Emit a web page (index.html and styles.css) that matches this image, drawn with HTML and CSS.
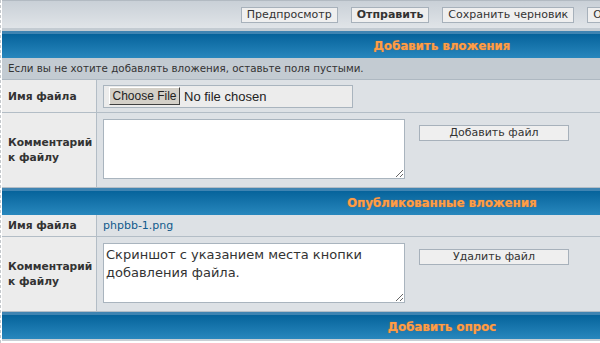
FILE: index.html
```html
<!DOCTYPE html>
<html>
  <head>
    <meta charset="utf-8">
    <title>Вложения</title>
    <link rel="stylesheet" href="styles.css">
  </head>
  <body>
    <div class="page">
      <div class="toolbar">
        <span class="btn">Предпросмотр</span>
        <span class="btn bold">Отправить</span>
        <span class="btn">Сохранить черновик</span>
        <span class="btn">Отмена</span>
      </div>

      <div class="cap">Добавить вложения</div>
      <div class="info">Если вы не хотите добавлять вложения, оставьте поля пустыми.</div>
      <div class="row short">
        <div class="label">Имя файла</div>
        <div class="field">
          <div class="file">
            <span class="choose">Choose File</span>
            <span class="nofile">No file chosen</span>
          </div>
        </div>
      </div>
      <div class="row tall">
        <div class="label">Комментарий к файлу</div>
        <div class="field top">
          <textarea class="comment"></textarea>
          <span class="btn wide">Добавить файл</span>
        </div>
      </div>

      <div class="cap">Опубликованные вложения</div>
      <div class="row name">
        <div class="label">Имя файла</div>
        <div class="field"><a class="link" href="#">phpbb-1.png</a></div>
      </div>
      <div class="row tall">
        <div class="label">Комментарий к файлу</div>
        <div class="field top">
          <textarea class="comment">Скриншот с указанием места кнопки добавления файла.</textarea>
          <span class="btn wide">Удалить файл</span>
        </div>
      </div>

      <div class="cap last">Добавить опрос</div>
    </div>
  </body>
</html>
```

FILE: styles.css
```css
html,
body {
  margin: 0;
  overflow: hidden;
  background: #ffffff;
}
body {
  font-family: "DejaVu Sans", Verdana, sans-serif;
  font-size: 11px;
  color: #333333;
  border-left: 1px dashed #c4c8cc;
  height: 343px;
}
.page {
  width: 880px;
  margin-left: 1px;
  background: #bcc4cb;
}

/* кнопки сверху */
.toolbar {
  border-top: 1px solid #b2bac2;
  height: 27px;
  display: flex;
  justify-content: center;
  align-items: center;
  gap: 13px;
  background: linear-gradient(#c9d0d7, #e0e4e8);
  border-bottom: 3px solid #c3cbd2;
}
.btn {
  display: inline-block;
  height: 14px;
  line-height: 14px;
  padding: 0 5px;
  border: 1px solid #a7b1bb;
  background: #efefef;
  color: #333333;
  white-space: nowrap;
}
.btn.bold {
  font-weight: bold;
}
.btn.wide {
  width: 138px;
  text-align: center;
  margin-left: 14px;
  margin-top: 6px;
}

/* заголовки */
.cap {
  height: 24px;
  line-height: 24px;
  border-top: 3px solid #3f84b2;
  background: linear-gradient(#06639b, #2887bd);
  color: #ff9e48;
  font-size: 11.8px;
  font-weight: bold;
  text-align: center;
  text-shadow: 0 0 1px #c0703a;
}
.cap.last {
  border-bottom: 2px solid #c8cfd5;
}

.info {
  height: 21px;
  line-height: 21px;
  padding-left: 6px;
  font-size: 10.3px;
  background: #c3cbd2;
  border-bottom: 1px solid #aeb8c1;
}

/* строки формы */
.row {
  display: grid;
  grid-template-columns: 95px 1fr;
  border-bottom: 1px solid #b3bdc6;
}
.row.short {
  height: 32px;
}
.row.tall {
  height: 74px;
}
.row.name {
  height: 21px;
}
.label {
  background: #ececec;
  border-right: 1px solid #b3bdc6;
  font-size: 10.7px;
  font-weight: bold;
  padding: 0 6px;
  display: flex;
  align-items: center;
  line-height: 15px;
}
.field {
  background: #dde1e5;
  display: flex;
  align-items: center;
  padding-left: 4px;
}
.field.top {
  align-items: flex-start;
  padding-left: 6px;
  padding-top: 6px;
}

.file {
  margin-left: 2px;
  width: 248px;
  height: 21px;
  border: 1px solid #a9b4be;
  background: #ececec;
  display: flex;
  align-items: center;
  font-family: "Liberation Sans", Arial, sans-serif;
  font-size: 13px;
  color: #222222;
}
.choose {
  margin-left: 5px;
  width: 69px;
  height: 16px;
  line-height: 16px;
  font-size: 12px;
  text-align: center;
  background: #d4d0c8;
  border: 1px solid;
  border-color: #ffffff #404040 #404040 #ffffff;
}
.nofile {
  margin-left: 4px;
}

.comment {
  width: 302px;
  height: 60px;
  box-sizing: border-box;
  margin: 0;
  border: 1px solid #a9b4be;
  background: #ffffff;
  padding: 2px 2px;
  font-family: "DejaVu Sans", Verdana, sans-serif;
  font-size: 13px;
  line-height: 18px;
  color: #333333;
  outline: none;
}

.link {
  color: #105a8c;
  text-decoration: none;
  padding-left: 2px;
}
```
